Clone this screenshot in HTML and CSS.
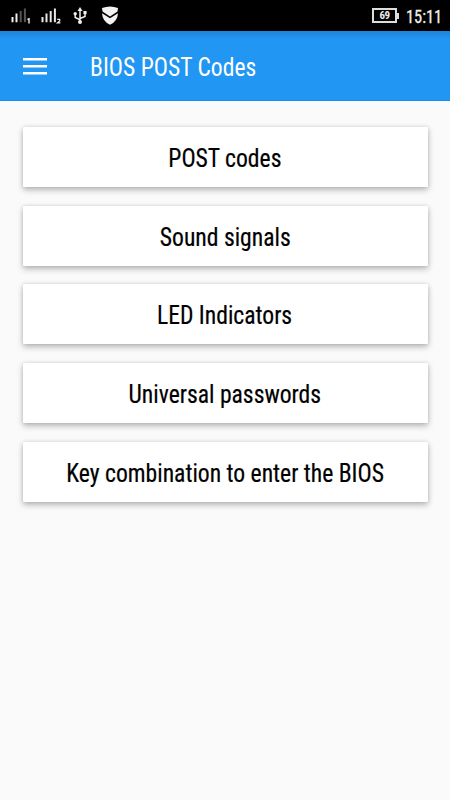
FILE: index.html
```html
<!DOCTYPE html>
<html lang="en">
<head>
    <meta charset="UTF-8">
    <meta name="viewport" content="width=device-width, initial-scale=1.0">
    <title>BIOS POST Codes</title>
    <link rel="stylesheet" href="styles.css">
</head>
<body>
    <div class="status-bar">
        <svg class="signal" width="20" height="18" viewBox="0 0 20 18">
            <path d="M.5 10h2v5.200h-2zM4.500 6.500h2v8.700h-2z" fill="#eee"/>
            <path d="M8.700 4h2v11.200h-2zM12.900 1.500h2v13.700h-2z" fill="#555"/>
            <path d="M16.500 12.500l1.500-.7V16.500" fill="none" stroke="#eee" stroke-width="1.400"/>
        </svg>
        <svg class="signal" width="20" height="18" viewBox="0 0 20 18">
            <path d="M.5 10h2v5.200h-2zM4.500 6.500h2v8.700h-2zM8.700 4h2v11.200h-2zM12.900 1.500h2v13.700h-2z" fill="#e8e8e8"/>
            <path d="M16.200 12.300h2.500v1.600l-2.300 2h3" fill="none" stroke="#eee" stroke-width="1.200"/>
        </svg>
        <svg class="usb" width="15" height="18" viewBox="0 0 15 18">
            <path d="M7 3v12M7 12.800L2.200 10.500V7M7 11.500l5-2V6" fill="none" stroke="#eee" stroke-width="1.500"/>
            <path d="M7 0l2.500 4h-5z" fill="#eee"/>
            <circle cx="2.200" cy="6.700" r="1.700" fill="#eee"/>
            <path d="M10.400 4h3.200v3.200h-3.200z" fill="#eee"/>
            <circle cx="7" cy="15" r="2" fill="#eee"/>
        </svg>
        <svg class="shield" width="18" height="20" viewBox="0 0 18 20">
            <path d="M1 2Q9-1 17 2l-.5 3.500L9 10.500 1.500 5.500z" fill="#f2f2f2"/>
            <path d="M1 7.300L9 12.300l8-5Q16.500 15.500 9 18.800 1.500 15.500 1 7.300z" fill="#f2f2f2"/>
        </svg>
        <div class="battery">69</div>
        <div class="clock">15:11</div>
    </div>
    <div class="toolbar">
        <svg class="menu-icon" width="24" height="18" viewBox="0 0 24 18">
            <path d="M0 0h24v2.500H0zM0 7h24v2.500H0zM0 14h24v2.500H0z" fill="#fff"/>
        </svg>
        <h1>BIOS POST Codes</h1>
    </div>
    <div class="menu-list">
        <button class="btn"><span>POST codes</span></button>
        <button class="btn"><span>Sound signals</span></button>
        <button class="btn"><span>LED Indicators</span></button>
        <button class="btn"><span>Universal passwords</span></button>
        <button class="btn"><span>Key combination to enter the BIOS</span></button>
    </div>
</body>
</html>
```
FILE: styles.css
```css
body{
    margin: 0;
    height: 800px;
    overflow: hidden;
    background-color: #fafafa;
    font-family: "Roboto Condensed", Roboto, sans-serif;
    font-stretch: 75%;
}
.status-bar{
    display: flex;
    box-sizing: border-box;
    height: 31px;
    padding: 7px 8px 0 11px;
    background-color: #000;
    color: #eee;
}
.signal{
    margin-right: 10px;
}
.usb{
    margin-left: 2px;
}
.shield{
    margin: -1px 0 0 13px;
}
.battery{
    position: relative;
    box-sizing: border-box;
    width: 25px;
    height: 15px;
    margin: 1px 0 0 auto;
    border: 2px solid #ddd;
    font-size: 11px;
    font-weight: 700;
    line-height: 12px;
    letter-spacing: -.5px;
    text-align: center;
}
.battery::after{
    content: "";
    position: absolute;
    top: 3px;
    right: -4px;
    width: 2px;
    height: 6px;
    background-color: #ddd;
}
.clock{
    width: 36px;
    margin-left: 9px;
    font-size: 19px;
    line-height: 19px;
    transform: scaleX(.86);
    transform-origin: left;
    -webkit-text-stroke: .3px #eee;
}
.toolbar{
    display: flex;
    align-items: center;
    box-sizing: border-box;
    height: 70px;
    padding: 3px 23px 0;
    background: linear-gradient(#1f82d3, #2196f3 8px);
    border-bottom: 1px solid #1b8fec;
    color: #fff;
}
h1{
    margin: 2px 0 0 43px;
    font-size: 25px;
    font-weight: 400;
    line-height: 30px;
    transform: scaleX(.945);
    transform-origin: left;
}
.menu-list{
    display: flex;
    flex-direction: column;
    gap: 18.75px;
    padding: 25.75px 22.5px 0;
}
.btn{
    height: 60px;
    padding: 3px 0 0;
    border: 0;
    border-radius: 1px;
    background-color: #fff;
    box-shadow: 0 3px 6px rgba(0,0,0,.26), 0 0 4px rgba(0,0,0,.12);
    color: #000;
    font: inherit;
    font-size: 25px;
}
.btn span{
    display: inline-block;
    transform: scaleX(.945);
    -webkit-text-stroke: .2px #000;
}
```
